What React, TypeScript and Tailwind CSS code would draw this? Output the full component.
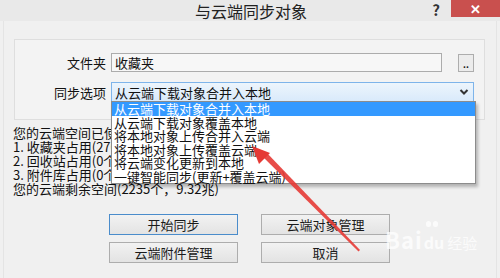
import React from "react";

const options = [
  "从云端下载对象合并入本地",
  "从云端下载对象覆盖本地",
  "将本地对象上传合并入云端",
  "将本地对象上传覆盖云端",
  "将云端变化更新到本地",
  "一键智能同步(更新+覆盖云端)",
];

const usage = [
  "您的云端空间已使用",
  "1. 收藏夹占用(2765个",
  "2. 回收站占用(0个",
  "3. 附件库占用(0个",
  "您的云端剩余空间(2235个，9.32兆)",
];

function Btn({ label, primary }: { label: string; primary?: boolean }) {
  return (
    <button
      className={
        "w-[129px] h-[21px] flex items-center justify-center text-[13px] leading-none text-[#1a1a1a] bg-gradient-to-b from-[#f2f2f2] to-[#e3e3e3] border " +
        (primary ? "border-[#4a8ccb]" : "border-[#adadad]")
      }
    >
      {label}
    </button>
  );
}

export default function App() {
  return (
    <div className="relative w-[500px] h-[278px] overflow-hidden bg-[#f0f0f0] font-['Noto_Sans_CJK_SC','Microsoft_YaHei',sans-serif] text-[#111]">
      {/* title bar */}
      <div className="h-[21px] flex items-center bg-[#e9e9e9] relative">
        <div className="flex-1 text-center text-[16px] leading-none text-[#222] pl-[2px]">与云端同步对象</div>
        <span className="absolute right-[60px] top-[2px] text-[15px] font-bold leading-none text-[#333]">?</span>
        <div className="absolute right-0 top-0 w-[49px] h-[17px] bg-[#c9504e] flex items-center justify-center text-white text-[13px] font-bold leading-none">
          ✕
        </div>
      </div>

      {/* body */}
      <div className="mx-[3px] h-[257px] border-l border-r border-[#e4e4e4] bg-[#f0f0f0] pt-[18px] px-[10px]">
        <div className="w-[471px] h-[81px] border border-[#dedede] bg-[#f3f3f3] pt-[13px]">
          <div className="flex items-center h-[19px]">
            <span className="w-[91px] text-right text-[13px] leading-none">文件夹</span>
            <div className="ml-[5px] w-[331px] h-[19px] border border-[#acacac] bg-[#f7f7f7] flex items-center pl-[3px] text-[13px] leading-none">
              收藏夹
            </div>
            <div className="ml-[16px] w-[16px] h-[18px] border border-[#adadad] bg-[#ececec] flex items-end justify-center text-[9px] leading-[12px] font-bold">
              ..
            </div>
          </div>
          <div className="flex items-center h-[20px] mt-[10px]">
            <span className="w-[91px] text-right text-[13px] leading-none">同步选项</span>
            <div className="ml-[5px] w-[363px] h-[20px] border border-[#7eb4ea] bg-gradient-to-b from-[#edf5fc] to-[#d9eafb] flex items-center justify-between pl-[3px] pr-[4px] text-[13px] leading-none">
              <span>从云端下载对象合并入本地</span>
              <svg width="10" height="8" viewBox="0 0 10 8">
                <path d="M1.5 2 L5 5.5 L8.5 2" fill="none" stroke="#333" strokeWidth="2" />
              </svg>
            </div>
          </div>
        </div>

        {/* usage lines (partly covered by the open list) */}
        <div className="mt-[6px] flex flex-col text-[13px] leading-[14px] -ml-[1px]">
          {usage.map((t) => (
            <span key={t} className="whitespace-nowrap">{t}</span>
          ))}
        </div>

        {/* buttons */}
        <div className="mt-[18px] ml-[95px] grid grid-cols-[129px_129px] gap-x-[23px] gap-y-[7px]">
          <Btn label="开始同步" primary />
          <Btn label="云端对象管理" />
          <Btn label="云端附件管理" />
          <Btn label="取消" />
        </div>
      </div>

      {/* open dropdown list */}
      <div className="absolute left-[111px] top-[101px] w-[365px] bg-white border border-[#8c8c8c] shadow-[2px_3px_3px_rgba(0,0,0,0.25)] text-[13px] leading-[13.5px]">
        {options.map((o, i) => (
          <div
            key={o}
            className={
              "h-[13.5px] pl-[2px] whitespace-nowrap " +
              (i === 0 ? "bg-[#3399ff] text-white" : "text-[#111]")
            }
          >
            {o}
          </div>
        ))}
      </div>

      {/* red annotation arrow */}
      <svg className="absolute left-0 top-0 pointer-events-none" width="500" height="278" viewBox="0 0 500 278">
        <polygon points="262,156 266,152 360,250 358.5,251.5" fill="#e53a35" opacity="0.9" />
        <polygon points="252,146 270,153 259,164" fill="#e53a35" />
      </svg>

      {/* watermark */}
      <div className="absolute left-[385px] top-[228px] flex items-end text-white/75 pointer-events-none">
        <span className="text-[22px] font-bold leading-none tracking-[1px]">Bai</span>
        <span className="relative ml-[1px] text-[16px] font-bold leading-none">
          <span className="absolute -top-[13px] left-[2px] flex gap-[2px]">
            <span className="w-[5px] h-[6px] rounded-full bg-white/75" />
            <span className="w-[5px] h-[6px] rounded-full bg-white/75" />
          </span>
          du
        </span>
        <span className="text-[15px] leading-none ml-[3px]">经验</span>
      </div>
    </div>
  );
}
